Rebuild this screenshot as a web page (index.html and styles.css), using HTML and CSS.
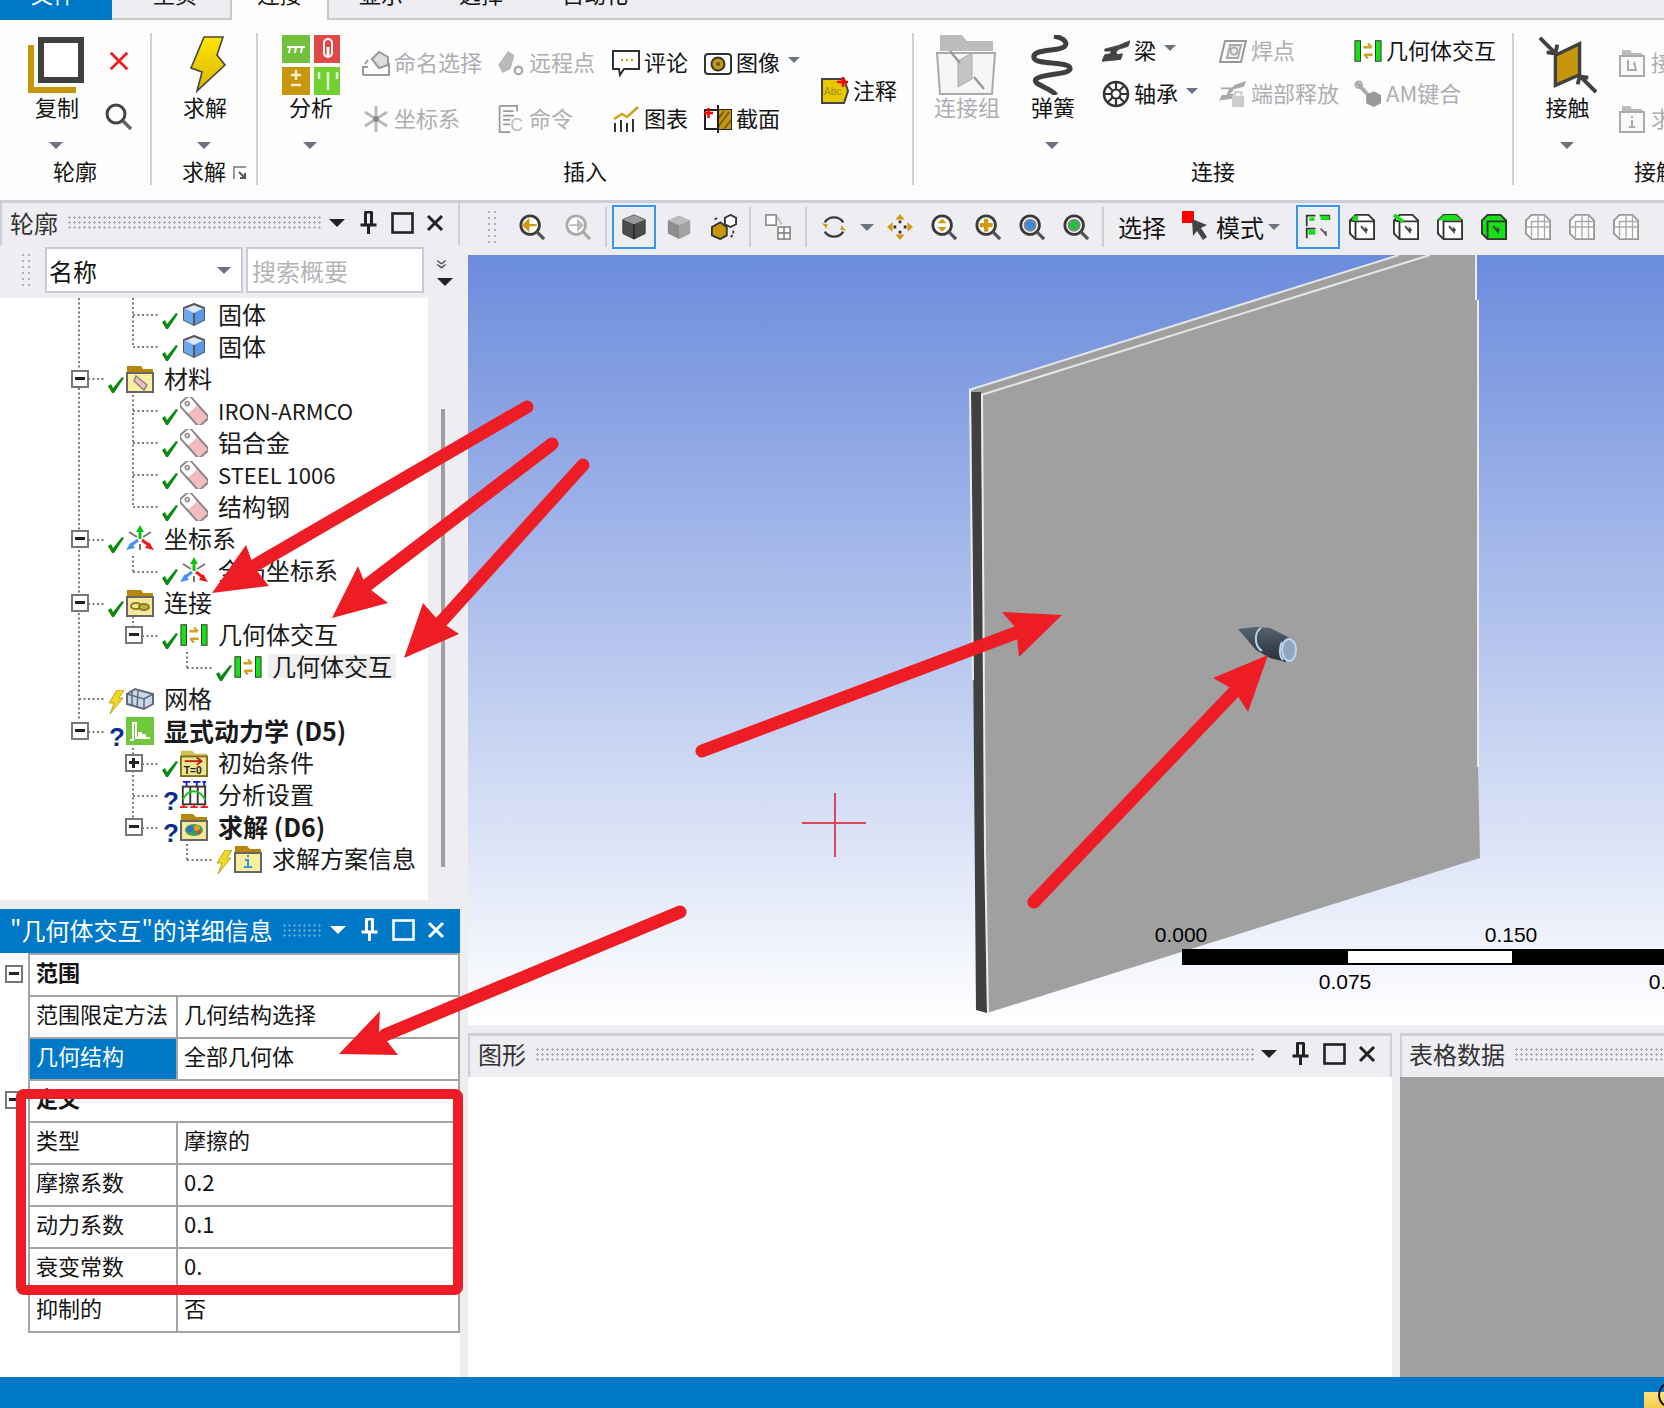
FILE: index.html
```html
<!DOCTYPE html>
<html lang="zh-CN">
<head>
<meta charset="utf-8">
<title>Mechanical</title>
<link rel="stylesheet" href="styles.css">
</head>
<body>
<svg class="defs" width="0" height="0" aria-hidden="true">
  <defs>
    <linearGradient id="gBolt" x1="0" y1="0" x2="0" y2="1"><stop offset="0" stop-color="#ffe600"/><stop offset="1" stop-color="#d8b400"/></linearGradient>
    <linearGradient id="gBullet" x1="0" y1="0" x2="0" y2="1"><stop offset="0" stop-color="#56626f"/><stop offset="1" stop-color="#262e38"/></linearGradient>

    <symbol id="copy" viewBox="0 0 60 60"><path d="M2 10h6v42h42v6H2z" fill="#c8960a"/><rect x="15" y="5" width="40" height="40" fill="#fff" stroke="#404040" stroke-width="6"/></symbol>
    <symbol id="redx" viewBox="0 0 24 24"><path d="M3 3l18 18M21 3L3 21" stroke="#f01c1c" stroke-width="3" fill="none"/></symbol>
    <symbol id="find" viewBox="0 0 28 28"><circle cx="11" cy="11" r="9" fill="none" stroke="#444" stroke-width="3"/><path d="M18 18l8 8" stroke="#666" stroke-width="3.500"/></symbol>
    <symbol id="bolt" viewBox="0 0 60 60"><path d="M30 2h19l-6 18 8 10-28 26 5-19-11-4z" fill="url(#gBolt)" stroke="#444" stroke-width="1.600"/></symbol>
    <symbol id="tiles" viewBox="-2 0 60 60"><rect width="28" height="28" fill="#72c03c"/><rect x="32" width="28" height="28" fill="#e04848"/><rect y="32" width="28" height="28" fill="#c8960a"/><rect x="32" y="32" width="28" height="28" fill="#72d030"/><path d="M5 12h18M8 12l-1 6M14 12l-1 6M20 12l-1 6" stroke="#fff" stroke-width="2"/><rect x="42" y="4" width="8" height="18" rx="4" fill="none" stroke="#fff" stroke-width="2"/><path d="M46 12v10" stroke="#fff" stroke-width="3"/><path d="M9 40h10M14 35v10M9 50h10" stroke="#fff" stroke-width="2.500" opacity=".8"/><path d="M37 37v7M46 37v18M55 37v7" stroke="#fff" stroke-width="2.500" opacity=".8"/></symbol>
    <symbol id="nsel" viewBox="0 0 28 28"><path d="M1 26v-8h5M1 26h26V14" fill="none" stroke="#999" stroke-width="2"/><path d="M10 10l7-7 9 5v8l-9 3z" fill="#ddd" stroke="#999" stroke-width="2"/><path d="M3 15l3-4" stroke="#999" stroke-width="2"/></symbol>
    <symbol id="coordgray" viewBox="0 0 28 28"><path d="M14 1v26M3 7l22 14M25 7L3 21" stroke="#bbb" stroke-width="3"/><circle cx="14" cy="14" r="3" fill="#888"/></symbol>
    <symbol id="remote" viewBox="0 0 30 28"><path d="M2 16L12 2l6 4-4 14-8 4z" fill="#bbb" stroke="#aaa"/><circle cx="23" cy="22" r="4" fill="none" stroke="#aaa" stroke-width="2.500"/></symbol>
    <symbol id="cmd" viewBox="0 0 28 32"><path d="M1 1h20v6M1 1v30h12" fill="none" stroke="#999" stroke-width="2"/><path d="M5 7h12M5 12h12M5 17h8M5 22h8" stroke="#999" stroke-width="2"/><text x="13" y="30" class="svgc">C</text></symbol>
    <symbol id="note" viewBox="0 0 28 26"><path d="M1 1h26v18H12l-4 6-1-6H1z" fill="#fff" stroke="#333" stroke-width="2"/><path d="M9 10h2M14 10h2M19 10h2" stroke="#c8960a" stroke-width="2"/></symbol>
    <symbol id="chart" viewBox="0 0 28 28"><path d="M2 14l8-5 5 3L26 2" fill="none" stroke="#d0a020" stroke-width="2.500"/><path d="M3 18v9M9 15v12M15 18v9M21 14v13" stroke="#333" stroke-width="2"/></symbol>
    <symbol id="camera" viewBox="0 0 28 26"><rect x="1" y="4" width="26" height="20" rx="3" fill="#fff" stroke="#333" stroke-width="2"/><circle cx="14" cy="14" r="6.500" fill="#c8960a" stroke="#333" stroke-width="2"/><circle cx="14" cy="14" r="2" fill="#555"/></symbol>
    <symbol id="section" viewBox="0 0 28 28"><rect x="1" y="5" width="26" height="19" fill="#fff" stroke="#222" stroke-width="2"/><rect x="14" y="5" width="13" height="19" fill="#c8960a"/><path d="M14 22l11-15M14 14l6-8M20 24l7-9" stroke="#7a5a08" stroke-width="2"/><path d="M14 0v28" stroke="#222" stroke-width="2"/><path d="M0 8h9M4.500 3v10" stroke="#f00" stroke-width="2.500"/></symbol>
    <symbol id="anno" viewBox="0 0 28 28"><path d="M1 2h22l4 12-4 12H1z" fill="#e8c800" stroke="#444" stroke-width="2"/><text x="3" y="18" class="svga">Abc</text><path d="M16 5h11M22 0v10" stroke="#f00" stroke-width="2.500"/></symbol>
    <symbol id="cgroup" viewBox="0 0 60 60"><path d="M4 16V0h22l5 6h26v10z" fill="#bcbcbc"/><path d="M1 18h58l-3 41H4z" fill="#f6f6f6" stroke="#aaa" stroke-width="2"/><path d="M22 26l14-8v26l-14 8z" fill="#c4c4c4" stroke="#aaa"/><path d="M14 16l10 12M48 54L38 42" stroke="#999" stroke-width="2.500"/></symbol>
    <symbol id="spring" viewBox="0 0 60 60"><path d="M32 1C46 4 48 12 36 14 24 16 10 16 12 23 14 30 46 26 48 33 50 40 20 38 14 44 10 50 28 52 34 60" fill="none" stroke="#3f3f3f" stroke-width="5"/></symbol>
    <symbol id="beam" viewBox="0 0 30 24"><path d="M3 10L18 6 30 1 28 7 18 10 15 13 16 16 22 15 20 21 0 23 3 16 9 15 10 12 3 12Z" fill="#444" stroke="#444"/></symbol>
    <symbol id="bearing" viewBox="0 0 28 28"><circle cx="14" cy="14" r="12" fill="none" stroke="#333" stroke-width="2.500"/><circle cx="14" cy="14" r="4.500" fill="none" stroke="#333" stroke-width="2"/><path d="M14 2v8M14 18v8M2 14h8M18 14h8M5.500 5.500l6 6M16.500 16.500l6 6M22.500 5.500l-6 6M11.500 16.500l-6 6" stroke="#333" stroke-width="2.200"/></symbol>
    <symbol id="weld" viewBox="0 0 28 26"><path d="M1 24L6 3h21l-5 21z" fill="none" stroke="#999" stroke-width="2"/><path d="M8 20l3-13h11l-3 13z" fill="#eee" stroke="#aaa" stroke-width="2"/><circle cx="15" cy="13" r="3.500" fill="none" stroke="#aaa" stroke-width="2"/></symbol>
    <symbol id="release" viewBox="0 0 30 30"><path d="M2 8h12l3-3L29 1l-2 6-11 3-4 5h4l-2 5-14 2 3-6h5l3-6H2z" fill="#aaa"/><rect x="14" y="17" width="13" height="12" fill="#ccc"/><path d="M17 17v-4h7v4" fill="none" stroke="#ccc" stroke-width="2"/></symbol>
    <symbol id="bodyint" viewBox="0 0 30 22"><rect x="1" width="6" height="22" fill="#16e016" stroke="#333" stroke-width="1"/><rect x="23" width="6" height="22" fill="#16e016" stroke="#333" stroke-width="1"/><path d="M10 7h9M15 3l4 4M20 15h-9M15 19l-4-4" fill="none" stroke="#d0a020" stroke-width="2.500"/></symbol>
    <symbol id="amb" viewBox="0 0 30 30"><path d="M3 3l13 14" stroke="#aaa" stroke-width="4"/><circle cx="5" cy="5" r="3.500" fill="none" stroke="#aaa" stroke-width="2"/><path d="M21 12l8 4v9l-8 4-8-4v-9z" fill="#999"/></symbol>
    <symbol id="contact" viewBox="0 0 62 60"><path d="M19 20L44 8v32L19 51z" fill="#c8960a" stroke="#404040" stroke-width="3.500"/><path d="M3 2l15 15M21 9l-2 9-9-1M61 58L46 43M42 50l2-8 9 1" fill="none" stroke="#404040" stroke-width="4"/></symbol>
    <symbol id="ffold" viewBox="0 0 26 28"><path d="M3 6V1h8l2 3h10v2z" fill="#bbb"/><rect x="1" y="7" width="24" height="20" fill="#fafafa" stroke="#aaa" stroke-width="2"/><path d="M9 11v10h8l-2-8" fill="none" stroke="#aaa" stroke-width="2"/></symbol>
    <symbol id="ffold2" viewBox="0 0 26 28"><path d="M3 6V1h8l2 3h10v2z" fill="#bbb"/><rect x="1" y="7" width="24" height="20" fill="#fafafa" stroke="#aaa" stroke-width="2"/><path d="M13 11v2M13 15v7M10 22h6" stroke="#aaa" stroke-width="2"/></symbol>
    <symbol id="corner" viewBox="0 0 14 14"><path d="M13 1H1v12" fill="none" stroke="#777" stroke-width="1.500"/><path d="M6 6l6 6M12 7v5H7" fill="none" stroke="#555" stroke-width="2"/></symbol>

    <symbol id="pin" viewBox="0 0 20 24"><path d="M6 1h8M7 1v12M13 1v12M2 14h16M10 14v9" fill="none" stroke="currentColor" stroke-width="3"/></symbol>
    <symbol id="maxi" viewBox="0 0 33 24"><rect x="7.500" y="2.500" width="20" height="19" fill="none" stroke="currentColor" stroke-width="2.600"/></symbol>
    <symbol id="closex" viewBox="0 0 33 24"><path d="M10 5l14 14M24 5L10 19" stroke="currentColor" stroke-width="3" fill="none"/></symbol>

    <symbol id="check" viewBox="0 0 16 16"><path d="M0 9l3-2 2 4 9-11 2 1L6 16H4z" fill="#0a8a0a"/></symbol>
    <symbol id="sbolt" viewBox="0 0 16 24"><path d="M9 0h7l-5 8h4L2 24l4-11H1z" fill="#f3d820" stroke="#a89420" stroke-width=".8"/></symbol>
    <symbol id="solid" viewBox="0 0 28 28"><path d="M14 3l10 4v12l-10 5-10-5V7z" fill="#dce8f8" stroke="#555" stroke-width="2"/><path d="M4 7l10 5v12L4 19z" fill="#70a8f0"/><path d="M14 12l10-5v12l-10 5z" fill="#5b95e5"/><path d="M14 12v12" stroke="#555" stroke-width="2"/></symbol>
    <symbol id="tag" viewBox="0 0 28 28"><g transform="rotate(-42 14 14)"><rect x="7" y="-1" width="14" height="30" rx="3" fill="#f4bcbc" stroke="#888" stroke-width="2"/><rect x="8" y="0" width="12" height="12" rx="2" fill="#fff"/><circle cx="14" cy="4" r="2" fill="none" stroke="#888" stroke-width="1.500"/></g></symbol>
    <symbol id="fmat" viewBox="0 0 28 28"><path d="M1 8V1h14l2 3h10v4z" fill="#b8860b"/><rect x="1" y="8" width="26" height="19" fill="#fbeea0" stroke="#666" stroke-width="2"/><path d="M10 11l11 9-3 5-10-9z" fill="#f4bcbc" stroke="#888" stroke-width="1.500"/></symbol>
    <symbol id="axes" viewBox="0 0 28 28"><path d="M3 7l8 5M25 7l-8 5" stroke="#777" stroke-width="2"/><path d="M14 14V5" stroke="#10c010" stroke-width="3"/><path d="M14 0l-4 7h8z" fill="#10c010"/><path d="M12 15l-8 6" stroke="#4a90f0" stroke-width="3"/><path d="M0 25l5-8 4 6z" fill="#4a90f0"/><path d="M16 15l8 6" stroke="#e81c1c" stroke-width="3"/><path d="M28 25l-5-8-4 6z" fill="#e81c1c"/><path d="M14 19v6" stroke="#777" stroke-width="2"/></symbol>
    <symbol id="fconn" viewBox="0 0 28 28"><path d="M1 8V1h14l2 3h10v4z" fill="#b8860b"/><rect x="1" y="8" width="26" height="19" fill="#f6e89a" stroke="#666" stroke-width="2"/><ellipse cx="10" cy="17" rx="5" ry="3" fill="none" stroke="#8a7a20" stroke-width="2"/><ellipse cx="18" cy="18" rx="5" ry="3" fill="#c8b040" stroke="#8a7a20" stroke-width="2"/></symbol>
    <symbol id="mesh" viewBox="0 0 28 22"><path d="M1 6l8-5 18 5v10l-9 5L1 16z" fill="#c8d8ec" stroke="#667" stroke-width="2"/><path d="M1 6l17 5 9-5M18 11v10M6 3v15M12 3l-1 17" fill="none" stroke="#667" stroke-width="1.500"/></symbol>
    <symbol id="dyn" viewBox="0 0 28 28"><rect width="28" height="28" fill="#72c83c"/><path d="M4 23h3V6h3v15h3v-5h2v5h2v-3h2v3h5" fill="none" stroke="#fff" stroke-width="2"/></symbol>
    <symbol id="finit" viewBox="0 0 30 30"><path d="M1 9V2h12l3 3h13v4z" fill="#d4c050"/><rect x="1" y="8" width="28" height="21" fill="#efe58c" stroke="#7a7020" stroke-width="2"/><path d="M5 13h18M18 9l5 4-5 4" fill="none" stroke="#c01818" stroke-width="2"/><text x="4" y="27" class="svgt">T=0</text></symbol>
    <symbol id="settings" viewBox="0 0 30 30"><path d="M3 1h8M7 1v5M14 1h8M18 1v5M24 1h4M26 1v5" stroke="#1c1cd0" stroke-width="2"/><rect x="3" y="6" width="24" height="19" fill="#fff" stroke="#333" stroke-width="2"/><path d="M11 6v19M19 6v19" stroke="#333" stroke-width="2"/><path d="M3 20C9 8 20 8 27 20" fill="none" stroke="#12c812" stroke-width="2"/><path d="M0 28h8M4 25v3M11 28h8M15 25v3M22 28h8M26 25v3" stroke="#f01818" stroke-width="2"/></symbol>
    <symbol id="fsolve" viewBox="0 0 28 28"><path d="M1 8V1h12l3 3h11v4z" fill="#b8860b"/><rect x="1" y="8" width="26" height="19" fill="#f4e89a" stroke="#666" stroke-width="2"/><ellipse cx="14" cy="17" rx="9" ry="6" fill="#3d9a60"/><circle cx="10" cy="16" r="3" fill="#3070d0"/><circle cx="17" cy="15" r="3" fill="#e0a020"/><circle cx="19" cy="19" r="2" fill="#d84040"/></symbol>
    <symbol id="finfo" viewBox="0 0 28 28"><path d="M1 8V1h12l3 3h11v4z" fill="#b8860b"/><rect x="1" y="8" width="26" height="19" fill="#f8ee9c" stroke="#666" stroke-width="2"/><path d="M14 10v2M11 15h3v7M10 22h8" fill="none" stroke="#3a90e8" stroke-width="2"/></symbol>

    <symbol id="mg" viewBox="0 0 28 28"><circle cx="12" cy="12" r="10" fill="#fff" stroke="#3a3a3a" stroke-width="3"/><path d="M19 19l8 8" stroke="#555" stroke-width="3.500"/></symbol>
    <symbol id="zprev" viewBox="0 0 28 28"><use href="#mg"/><path d="M5 12h14M5 12l5-5v10z" fill="#d09a10" stroke="#d09a10" stroke-width="2.500"/></symbol>
    <symbol id="znext" viewBox="0 0 28 28"><circle cx="12" cy="12" r="10" fill="#fff" stroke="#aaa" stroke-width="3"/><path d="M19 19l8 8" stroke="#aaa" stroke-width="3.500"/><path d="M5 12h13M19 12l-5-5v10z" fill="#bbb" stroke="#bbb" stroke-width="2"/></symbol>
    <symbol id="cubeD" viewBox="0 0 28 28"><path d="M14 1l12 5v15l-12 6-12-6V6z" fill="#4c4c4c" stroke="#333"/><path d="M2 6l12-5 12 5-12 5z" fill="#9a9a9a"/><path d="M14 11v16" stroke="#222" stroke-width="1.500"/></symbol>
    <symbol id="cubeL" viewBox="0 0 28 28"><path d="M14 2l12 5v14l-12 6-12-6V7z" fill="#8c8c8c"/><path d="M2 7l12-5 12 5-12 5z" fill="#bdbdbd"/><path d="M14 12l12-5v14l-12 6z" fill="#a4a4a4"/></symbol>
    <symbol id="cubeX" viewBox="0 0 28 28"><path d="M1 14l9-5 7 5v9l-7 4-9-4z" fill="#c8960a" stroke="#333" stroke-width="2"/><path d="M15 4l6-3 6 3v7l-6 3-6-3z" fill="#fff" stroke="#333" stroke-width="2"/><path d="M4 6l4-3M24 18v4l-4 4" fill="none" stroke="#333" stroke-width="2" stroke-dasharray="3 2"/></symbol>
    <symbol id="grid2" viewBox="0 0 28 28"><rect x="1" y="1" width="11" height="11" fill="#fff" stroke="#777" stroke-width="1.500"/><rect x="14" y="14" width="13" height="13" fill="#fff" stroke="#777" stroke-width="1.500"/><path d="M20.500 14v13M14 20.500h13" stroke="#777" stroke-width="1.500"/><path d="M13 3l5 8" stroke="#bbb" stroke-width="2"/></symbol>
    <symbol id="orbit" viewBox="0 0 28 28"><path d="M4 9A12 12 0 0 1 24 9M24 19A12 12 0 0 1 4 19" fill="none" stroke="#3a3a3a" stroke-width="2.500"/><path d="M1 10l6 1-1 5zM27 18l-6-1 1-5z" fill="#d09a10"/></symbol>
    <symbol id="pan" viewBox="0 0 28 28"><path d="M14 0l5 6H9zM14 28l-5-6h10zM0 14l6-5v10zM28 14l-6 5V9z" fill="#d09a10"/><path d="M14 7v3M14 18v3M7 14h3M18 14h3" stroke="#333" stroke-width="3"/></symbol>
    <symbol id="zud" viewBox="0 0 28 28"><use href="#mg"/><path d="M12 5l5 5H7zM12 19l-5-5h10z" fill="#d09a10"/></symbol>
    <symbol id="zplus" viewBox="0 0 28 28"><use href="#mg"/><path d="M12 5v14M5 12h14" stroke="#d09a10" stroke-width="4.500"/></symbol>
    <symbol id="zblue" viewBox="0 0 28 28"><use href="#mg"/><circle cx="12" cy="12" r="6" fill="#3e88d8" stroke="#888" stroke-width="2"/></symbol>
    <symbol id="zgreen" viewBox="0 0 28 28"><use href="#mg"/><circle cx="12" cy="12" r="6" fill="#20c040" stroke="#888" stroke-width="2"/></symbol>
    <symbol id="cursor" viewBox="0 0 26 32"><rect width="12" height="12" fill="#f00"/><path d="M10 8l15 6-6 3 6 9-4 3-6-9-4 5z" fill="#444"/></symbol>
    <symbol id="selAll" viewBox="0 0 30 30"><path d="M2 14V2h10M17 2h11v5M2 28V17h10" fill="none" stroke="#333" stroke-width="2"/><rect x="5" y="4" width="6" height="4" fill="#16e016"/><rect x="18" y="2" width="10" height="5" fill="#16e016"/><rect x="4" y="18" width="8" height="6" fill="#16e016"/><path d="M18 17l6 6v-3M25 25l-2-2" stroke="#555" stroke-width="2" fill="none"/></symbol>
    <symbol id="cv" viewBox="0 0 28 28"><path d="M1 7l6-6h14l6 6v20H7l-6-6z" fill="#fff" stroke="#333" stroke-width="2"/><path d="M7 27V8h20M1 7l6 1" fill="none" stroke="#333" stroke-width="2"/><rect x="4" y="2" width="6" height="5" fill="#16e016"/><path d="M13 13l5 6v-3l2 2" fill="none" stroke="#444" stroke-width="2"/></symbol>
    <symbol id="ce" viewBox="0 0 28 28"><path d="M1 7l6-6h14l6 6v20H7l-6-6z" fill="#fff" stroke="#333" stroke-width="2"/><path d="M7 27V8h20M1 7l6 1" fill="none" stroke="#333" stroke-width="2"/><path d="M1 1l10 7" stroke="#16e016" stroke-width="4"/><path d="M13 13l5 6v-3l2 2" fill="none" stroke="#444" stroke-width="2"/></symbol>
    <symbol id="cf" viewBox="0 0 28 28"><path d="M1 7l6-6h14l6 6v20H7l-6-6z" fill="#fff" stroke="#333" stroke-width="2"/><path d="M1 7l6-6h14l6 6H7z" fill="#16e016"/><path d="M7 27V8h20" fill="none" stroke="#333" stroke-width="2"/><path d="M13 13l5 6v-3l2 2" fill="none" stroke="#444" stroke-width="2"/></symbol>
    <symbol id="cb" viewBox="0 0 28 28"><path d="M1 7l6-6h14l6 6v20H7l-6-6z" fill="#16e016" stroke="#333" stroke-width="2"/><path d="M7 27V8h20" fill="none" stroke="#333" stroke-width="2"/><path d="M13 13l5 6v-3l2 2" fill="none" stroke="#444" stroke-width="2"/></symbol>
    <symbol id="cg" viewBox="0 0 28 28"><path d="M1 7l6-6h14l6 6v20H7l-6-6z" fill="#fff" stroke="#999" stroke-width="2"/><path d="M7 27V8h20M14 1v26M21 1v26M1 14h26" fill="none" stroke="#aaa" stroke-width="1.500"/></symbol>
  </defs>
</svg>

<nav class="tabs">
  <div class="tab tab-file">文件</div>
  <div class="tab tab-home">主页</div>
  <div class="tab tab-active">连接</div>
  <div class="tab tab-show">显示</div>
  <div class="tab tab-sel">选择</div>
  <div class="tab tab-auto">自动化</div>
  <div class="tab tab-rest"></div>
</nav>

<section class="ribbon">
  <div class="grp g1">
    <div class="grp-body">
      <div class="big w112"><svg class="bi"><use href="#copy"/></svg><span>复制</span><i class="caret"></i></div>
      <div class="stack"><svg class="ic24"><use href="#redx"/></svg><svg class="ic28"><use href="#find"/></svg></div>
    </div>
    <div class="grp-label">轮廓</div>
  </div>
  <div class="grp g2">
    <div class="grp-body"><div class="big w104"><svg class="bi"><use href="#bolt"/></svg><span>求解</span><i class="caret"></i></div></div>
    <div class="grp-label">求解<svg class="corner"><use href="#corner"/></svg></div>
  </div>
  <div class="grp g3">
    <div class="grp-body">
      <div class="big w104"><svg class="bi"><use href="#tiles"/></svg><span>分析</span><i class="caret"></i></div>
      <div class="insert-grid">
        <div class="item off"><svg class="ic28"><use href="#nsel"/></svg>命名选择</div>
        <div class="item off"><svg class="ic28"><use href="#remote"/></svg>远程点</div>
        <div class="item"><svg class="ic28"><use href="#note"/></svg>评论</div>
        <div class="item"><svg class="ic28"><use href="#camera"/></svg>图像<i class="caret small"></i></div>
        <div class="item span2"><svg class="ic28"><use href="#anno"/></svg>注释</div>
        <div class="item off"><svg class="ic28"><use href="#coordgray"/></svg>坐标系</div>
        <div class="item off"><svg class="ic28"><use href="#cmd"/></svg>命令</div>
        <div class="item"><svg class="ic28"><use href="#chart"/></svg>图表</div>
        <div class="item"><svg class="ic28"><use href="#section"/></svg>截面</div>
      </div>
    </div>
    <div class="grp-label">插入</div>
  </div>
  <div class="grp g4">
    <div class="grp-body">
      <div class="big w104 off"><svg class="bi"><use href="#cgroup"/></svg><span>连接组</span></div>
      <div class="big w68"><svg class="bi"><use href="#spring"/></svg><span>弹簧</span><i class="caret"></i></div>
      <div class="conn-grid">
        <div class="item"><svg class="ic28"><use href="#beam"/></svg>梁<i class="caret small"></i></div>
        <div class="item off"><svg class="ic28"><use href="#weld"/></svg>焊点</div>
        <div class="item"><svg class="ic28"><use href="#bodyint"/></svg>几何体交互</div>
        <div class="item"><svg class="ic28"><use href="#bearing"/></svg>轴承<i class="caret small"></i></div>
        <div class="item off"><svg class="ic28"><use href="#release"/></svg>端部释放</div>
        <div class="item off"><svg class="ic28"><use href="#amb"/></svg>AM键合</div>
      </div>
    </div>
    <div class="grp-label">连接</div>
  </div>
  <div class="grp g5">
    <div class="grp-body">
      <div class="big w105"><svg class="bi"><use href="#contact"/></svg><span>接触</span><i class="caret"></i></div>
      <div class="tail-col">
        <div class="item off"><svg class="ic26"><use href="#ffold"/></svg>接触工具</div>
        <div class="item off"><svg class="ic26"><use href="#ffold2"/></svg>求解方案</div>
      </div>
    </div>
    <div class="grp-label">接触</div>
  </div>
</section>

<main class="main">
  <aside class="left">
    <div class="phead bordered">
      <span class="ptitle">轮廓</span><span class="dots"></span>
      <span class="pctl"><i class="caret dark"></i></span>
      <svg class="pbtn"><use href="#pin"/></svg><svg class="pbtn"><use href="#maxi"/></svg><svg class="pbtn"><use href="#closex"/></svg>
    </div>
    <div class="search">
      <span class="grip"></span>
      <div class="combo">名称<i class="caret"></i></div>
      <div class="sbox">搜索概要</div>
      <div class="chev"><span class="chev-top">»</span><i class="caret dark"></i></div>
    </div>
    <div class="treewrap">
      <div class="tree">
        <svg class="tree-lines" viewBox="0 298 428 602">
          <path d="M79 298V720M133 298V347M133 395V507M133 556V572M133 612V628M133 748V828M187 652V668M187 844V860M88 379H106M88 540H106M88 604H106M88 732H106M79 699H106M133 315H160M133 347H160M133 411H160M133 443H160M133 475H160M133 507H160M133 572H160M142 636H160M142 764H160M133 796H160M142 828H160M187 668H214M187 860H214"/>
        </svg>
        <div class="row d2"><span class="tw"></span><svg class="st"><use href="#check"/></svg><svg class="ti"><use href="#solid"/></svg><span class="lb">固体</span></div>
        <div class="row d2"><span class="tw"></span><svg class="st"><use href="#check"/></svg><svg class="ti"><use href="#solid"/></svg><span class="lb">固体</span></div>
        <div class="row d1"><span class="tw"><b class="bx"></b></span><svg class="st"><use href="#check"/></svg><svg class="ti"><use href="#fmat"/></svg><span class="lb">材料</span></div>
        <div class="row d2"><span class="tw"></span><svg class="st"><use href="#check"/></svg><svg class="ti"><use href="#tag"/></svg><span class="lb lat">IRON-ARMCO</span></div>
        <div class="row d2"><span class="tw"></span><svg class="st"><use href="#check"/></svg><svg class="ti"><use href="#tag"/></svg><span class="lb">铝合金</span></div>
        <div class="row d2"><span class="tw"></span><svg class="st"><use href="#check"/></svg><svg class="ti"><use href="#tag"/></svg><span class="lb lat">STEEL 1006</span></div>
        <div class="row d2"><span class="tw"></span><svg class="st"><use href="#check"/></svg><svg class="ti"><use href="#tag"/></svg><span class="lb">结构钢</span></div>
        <div class="row d1"><span class="tw"><b class="bx"></b></span><svg class="st"><use href="#check"/></svg><svg class="ti"><use href="#axes"/></svg><span class="lb">坐标系</span></div>
        <div class="row d2"><span class="tw"></span><svg class="st"><use href="#check"/></svg><svg class="ti"><use href="#axes"/></svg><span class="lb">全局坐标系</span></div>
        <div class="row d1"><span class="tw"><b class="bx"></b></span><svg class="st"><use href="#check"/></svg><svg class="ti"><use href="#fconn"/></svg><span class="lb">连接</span></div>
        <div class="row d2"><span class="tw"><b class="bx"></b></span><svg class="st"><use href="#check"/></svg><svg class="ti"><use href="#bodyint"/></svg><span class="lb">几何体交互</span></div>
        <div class="row d3"><span class="tw"></span><svg class="st"><use href="#check"/></svg><svg class="ti"><use href="#bodyint"/></svg><span class="lb sel">几何体交互</span></div>
        <div class="row d1"><span class="tw"></span><svg class="st bolt"><use href="#sbolt"/></svg><svg class="ti"><use href="#mesh"/></svg><span class="lb">网格</span></div>
        <div class="row d1"><span class="tw"><b class="bx"></b></span><span class="q">?</span><svg class="ti"><use href="#dyn"/></svg><span class="lb strong">显式动力学 (D5)</span></div>
        <div class="row d2"><span class="tw"><b class="bx plus"></b></span><svg class="st"><use href="#check"/></svg><svg class="ti"><use href="#finit"/></svg><span class="lb">初始条件</span></div>
        <div class="row d2"><span class="tw"></span><span class="q">?</span><svg class="ti"><use href="#settings"/></svg><span class="lb">分析设置</span></div>
        <div class="row d2"><span class="tw"><b class="bx"></b></span><span class="q">?</span><svg class="ti"><use href="#fsolve"/></svg><span class="lb strong">求解 (D6)</span></div>
        <div class="row d3"><span class="tw"></span><svg class="st bolt"><use href="#sbolt"/></svg><svg class="ti"><use href="#finfo"/></svg><span class="lb">求解方案信息</span></div>
      </div>
      <div class="scroller"><span class="thumb"></span></div>
    </div>
    <div class="phead blue">
      <span class="ptitle">"几何体交互"的详细信息</span><span class="dots light"></span>
      <span class="pctl"><i class="caret wht"></i></span>
      <svg class="pbtn"><use href="#pin"/></svg><svg class="pbtn"><use href="#maxi"/></svg><svg class="pbtn"><use href="#closex"/></svg>
    </div>
    <div class="details">
      <table class="dt">
        <colgroup><col class="c0"><col class="c1"><col></colgroup>
        <tr><td class="gut"><b class="bx"></b></td><td colspan="2" class="sec">范围</td></tr>
        <tr><td class="gut"></td><td>范围限定方法</td><td>几何结构选择</td></tr>
        <tr><td class="gut"></td><td class="hl">几何结构</td><td>全部几何体</td></tr>
        <tr><td class="gut"><b class="bx"></b></td><td colspan="2" class="sec">定义</td></tr>
        <tr><td class="gut"></td><td>类型</td><td>摩擦的</td></tr>
        <tr><td class="gut"></td><td>摩擦系数</td><td>0.2</td></tr>
        <tr><td class="gut"></td><td>动力系数</td><td>0.1</td></tr>
        <tr><td class="gut"></td><td>衰变常数</td><td>0.</td></tr>
        <tr><td class="gut"></td><td>抑制的</td><td>否</td></tr>
      </table>
    </div>
  </aside>

  <div class="right">
    <div class="toolbar">
      <span class="grip"></span>
      <div class="tg ga"><svg class="tool"><use href="#zprev"/></svg><svg class="tool"><use href="#znext"/></svg></div>
      <span class="tsep s5"></span>
      <div class="tg gb"><span class="tool on"><svg><use href="#cubeD"/></svg></span><svg class="tool"><use href="#cubeL"/></svg><svg class="tool"><use href="#cubeX"/></svg></div>
      <span class="tsep s3"></span>
      <div class="tg gc"><svg class="tool"><use href="#grid2"/></svg></div>
      <span class="tsep s5"></span>
      <div class="tg gc"><svg class="tool"><use href="#orbit"/></svg><span class="tcaret"><i class="caret"></i></span><svg class="tool"><use href="#pan"/></svg><svg class="tool"><use href="#zud"/></svg><svg class="tool"><use href="#zplus"/></svg><svg class="tool"><use href="#zblue"/></svg><svg class="tool"><use href="#zgreen"/></svg></div>
      <span class="tsep s4"></span>
      <span class="ttext t1">选择</span>
      <svg class="tcur"><use href="#cursor"/></svg>
      <span class="ttext t2">模式</span><i class="caret mode"></i>
      <div class="tg gd"><span class="tool on"><svg><use href="#selAll"/></svg></span><svg class="tool"><use href="#cv"/></svg><svg class="tool"><use href="#ce"/></svg><svg class="tool"><use href="#cf"/></svg><svg class="tool"><use href="#cb"/></svg><svg class="tool"><use href="#cg"/></svg><svg class="tool"><use href="#cg"/></svg><svg class="tool"><use href="#cg"/></svg></div>
    </div>
    <div class="view">
      <svg class="scene" viewBox="468 255 1196 770">
        <path d="M969 390L1399 255H1475V300L981 395Z" class="plate"/>
        <path d="M981 395L1430 255H1475L1477 300L1478 767L1480 858L987 1013Z" class="plate"/>
        <path d="M969 390L1399 255M981 395L1430 255" class="pl-line"/>
        <path d="M971 392H981L987 1013L976 1010Z" class="pl-dark"/>
        <path d="M982 395L985 850L988 1013" class="pl-edge"/>
        <path d="M1476 255V300M1478 300V767" class="pl-edge"/>
        <path d="M970 390L973 680" class="pl-edge"/>
        <path d="M802 823H866M835 793V857" class="cross"/>
        <path d="M1238 629L1256 627L1270 628L1294 640L1286 662L1270 658L1256 650Z" fill="url(#gBullet)"/>
        <path d="M1261 628C1254 632 1254 646 1262 651" class="blt"/>
        <ellipse cx="1289" cy="650" rx="7" ry="11" fill="#8fa6c0" stroke="#bcd6f0" stroke-width="2"/>
        <path d="M1282 642C1279 648 1279 656 1283 660" class="blt"/>
        <rect x="1182" y="949" width="482" height="16" fill="#000"/>
        <rect x="1348" y="951" width="164" height="12" fill="#fff"/>
        <text x="1181" y="942" class="sc">0.000</text>
        <text x="1511" y="942" class="sc">0.150</text>
        <text x="1345" y="989" class="sc">0.075</text>
        <text x="1675" y="989" class="sc">0.225</text>
      </svg>
    </div>
    <div class="lower">
      <section class="lp gfx">
        <div class="phead bordered">
          <span class="ptitle">图形</span><span class="dots"></span>
          <span class="pctl"><i class="caret dark"></i></span>
          <svg class="pbtn"><use href="#pin"/></svg><svg class="pbtn"><use href="#maxi"/></svg><svg class="pbtn"><use href="#closex"/></svg>
        </div>
        <div class="lp-body fill-white"></div>
      </section>
      <section class="lp tbl">
        <div class="phead bordered">
          <span class="ptitle">表格数据</span><span class="dots"></span>
        </div>
        <div class="lp-body fill-gray"></div>
      </section>
    </div>
  </div>
</main>

<footer class="status"><span class="msg"></span><span class="ring"></span></footer>

<svg class="marks" viewBox="0 0 1664 1408" aria-hidden="true">
  <g class="ar-line">
    <path d="M527 407L240 574"/>
    <path d="M552 444L358 592"/>
    <path d="M583 465L432 632"/>
    <path d="M702 751L1018 632"/>
    <path d="M1034 902L1234 692"/>
    <path d="M680 912L385 1035"/>
  </g>
  <g class="ar-head">
    <path d="M212 593L246 545L254 567L269 586Z"/>
    <path d="M332 618L358 566L366 586L388 603Z"/>
    <path d="M404 658L423 603L438 620L459 634Z"/>
    <path d="M1062 615L1002 612L1016 628L1019 657Z"/>
    <path d="M1268 655L1213 678L1234 690L1248 712Z"/>
    <path d="M339 1054L380 1011L379 1031L398 1055Z"/>
  </g>
  <rect x="21" y="1094" width="437" height="196" rx="3" class="redbox"/>
</svg>
</body>
</html>
```
FILE: styles.css
```css
* { box-sizing: border-box; }
html, body { margin: 0; padding: 0; }
body {
  position: relative;
  width: 1664px;
  height: 1408px;
  overflow: hidden;
  background: #eeeef2;
  color: #141414;
  font-family: "Noto Sans CJK SC", "Noto Sans", sans-serif;
  font-size: 22px;
  line-height: 24px;
}
i { display: block; font-style: normal; }
svg { display: block; flex: none; overflow: visible; }
.defs { position: absolute; }

.tabs { display: flex; align-items: flex-start; height: 20px; overflow: hidden; background: #eeeef2; }
.tab { flex: none; height: 39px; margin-top: -19px; text-align: center; border-bottom: 2px solid #c8c8c8; }
.tab-file { width: 112px; padding-right: 6px; background: #0078c8; color: #fff; border-bottom-color: #0078c8; }
.tab-home { width: 120px; padding-left: 8px; border-right: 2px solid #c8c8c8; }
.tab-active { width: 95px; background: #fdfdfd; border-bottom-color: #fdfdfd; }
.tab-show { width: 106px; border-left: 2px solid #c8c8c8; }
.tab-sel { width: 96px; }
.tab-auto { width: 132px; }
.tab-rest { flex: 1; }

/* ribbon */
.ribbon { display: flex; height: 180px; padding-top: 13px; background: #fdfdfd; overflow: hidden; }
.grp { flex: none; height: 152px; display: grid; grid-template-rows: 126px 26px; border-right: 2px solid #cfcfd4; }
.g1 { width: 152px; }
.g2 { width: 106px; }
.g3 { width: 656px; }
.g4 { width: 600px; }
.g5 { width: 284px; border-right: 0; }
.grp-body { display: flex; align-items: flex-start; }
.grp-label { position: relative; text-align: center; line-height: 22px; }
.corner { position: absolute; left: 81px; top: 7px; width: 14px; height: 14px; }
.big { flex: none; display: flex; flex-direction: column; align-items: center; padding-top: 2px; }
.big span { height: 24px; margin-top: -1px; padding-left: 2px; }
.w112 { width: 112px; }
.w105 { width: 105px; }
.w104 { width: 104px; }
.w68 { width: 68px; }
.bi { width: 60px; height: 60px; }
.caret { width: 0; height: 0; border-left: 7px solid transparent; border-right: 7px solid transparent; border-top: 7px solid #6b7280; }
.big .caret { margin-top: 24px; }
.caret.small { border-width: 6px 6px 0; margin-left: 4px; margin-top: -2px; }
.caret.dark { border-left-width: 8px; border-right-width: 8px; border-top: 8px solid #222; }
.caret.wht { border-left-width: 8px; border-right-width: 8px; border-top: 8px solid #fff; }
.stack { display: flex; flex-direction: column; align-items: center; width: 20px; gap: 31px; padding-top: 17px; margin-left: -3px; }
.ic24 { width: 22px; height: 22px; }
.ic28 { width: 28px; height: 28px; }
.ic26 { width: 26px; height: 28px; }
.item { display: flex; align-items: center; gap: 4px; padding-bottom: 4px; white-space: nowrap; }
.item svg { margin-top: 4px; }
.off { color: #adadb2; }
.insert-grid { display: grid; grid-template-columns: 135px 115px 92px 117px 90px; grid-template-rows: 56px 56px; padding-top: 2px; }
.span2 { grid-row: 1 / span 2; grid-column: 5; }
.conn-grid { display: grid; grid-template-columns: 117px 135px 140px; grid-template-rows: 36px 36px; row-gap: 7px; margin-left: 16px; }
.tail-col { display: grid; grid-template-rows: 56px 56px; padding-top: 2px; }
.tail-col .item { gap: 6px; }
.svgc { font: 20px "Liberation Sans", sans-serif; fill: #bbb; }
.svga { font: 10px "Liberation Sans", sans-serif; fill: #9a8a10; }
.svgt { font: bold 11px "Liberation Sans", sans-serif; fill: #222; }

/* shell */
.main { display: grid; grid-template-columns: 460px 1fr; height: 1177px; border-top: 3px solid #ccced8; }
.left { display: flex; flex-direction: column; min-height: 0; }
.right { display: flex; flex-direction: column; min-width: 0; padding-left: 8px; }

/* panel heads */
.phead { flex: none; display: flex; align-items: center; height: 42px; padding: 0 8px 3px 10px; font-size: 24px; color: #333; }
.phead.bordered { border-left: 2px solid #ccced8; border-right: 2px solid #ccced8; padding-left: 8px; padding-right: 7px; }
.phead.blue { height: 44px; padding-bottom: 2px; background: #0078c8; color: #fff; margin-top: 9px; }
.ptitle { flex: none; white-space: nowrap; }
.dots { flex: 1; height: 15px; margin-left: 9px; background-image: radial-gradient(circle, #b0b0b8 1px, transparent 1.2px); background-size: 5px 5px; }
.dots.light { background-image: radial-gradient(circle, #5aa4dc 1px, transparent 1.2px); }
.pctl { flex: none; width: 30px; display: flex; justify-content: center; }
.pbtn { width: 33px; height: 24px; color: #222; flex: none; }
.blue .pbtn { color: #fff; }

/* search */
.search { flex: none; display: flex; align-items: center; height: 53px; padding: 0 0 4px 20px; }
.grip { flex: none; width: 14px; height: 36px; background-image: radial-gradient(circle, #b0b0b8 1.2px, transparent 1.4px); background-size: 6px 6px; }
.search .grip { margin-right: 11px; }
.combo { flex: none; display: flex; justify-content: space-between; align-items: center; width: 198px; height: 46px; padding: 2px 10px 0 2px; background: #fff; border: 2px solid #c8cad8; font-size: 24px; }
.sbox { flex: none; width: 178px; height: 46px; margin-left: 3px; padding: 10px 0 0 4px; background: #fff; border: 2px solid #c8cad8; font-size: 24px; color: #b5b5b8; }
.chev { flex: none; width: 22px; margin-left: 10px; display: flex; flex-direction: column; align-items: center; gap: 3px; }
.chev-top { transform: rotate(90deg); color: #555; font-size: 22px; line-height: 22px; height: 22px; }

/* tree */
.treewrap { flex: none; display: flex; height: 602px; }
.tree { position: relative; width: 428px; padding-top: 1px; background: #fff; font-size: 24px; color: #1a1a1a; }
.tree-lines { position: absolute; left: 0; top: 0; width: 428px; height: 602px; fill: none; stroke: #7c7c7c; stroke-width: 2; stroke-dasharray: 2 2.500; }
.row { position: relative; display: flex; align-items: center; height: 32px; white-space: nowrap; }
.d1 { padding-left: 71px; }
.d2 { padding-left: 125px; }
.d3 { padding-left: 179px; }
.tw { flex: none; width: 37px; display: flex; }
.bx { position: relative; display: block; flex: none; width: 18px; height: 18px; background: #fff; border: 2px solid #777; }
.bx::before { content: ""; position: absolute; left: 2px; right: 2px; top: 5px; height: 3px; background: #222; }
.bx.plus::after { content: ""; position: absolute; top: 2px; bottom: 2px; left: 5px; width: 3px; background: #222; }
.st { width: 16px; height: 16px; margin-top: 12px; }
.st.bolt { height: 24px; margin-top: 6px; }
.q { flex: none; width: 16px; margin-top: 12px; padding-left: 1px; font: bold 26px/24px "Liberation Sans", sans-serif; color: #0b2f8f; }
.ti { width: 28px; height: 28px; margin: 0 10px 0 2px; }
.lb { margin-top: -3px; }
.lat { font-size: 22px; }
.sel { background: #efefef; margin-left: -4px; padding: 0 4px; }
.strong { font-weight: 700; font-size: 25px; }
.scroller { flex: 1; position: relative; display: flex; justify-content: center; }
.thumb { display: block; width: 4px; height: 458px; margin: 111px 0 0 -2px; background: #a0a0a0; }

/* details */
.details { flex: 1; background: #fff; overflow: hidden; }
.dt { width: 460px; table-layout: fixed; border-collapse: collapse; font-size: 22px; }
.dt td { height: 42px; padding: 0 0 8px 6px; border: 2px solid #a4a4a4; white-space: nowrap; }
.dt td.gut { border: 0; border-right: 2px solid #a4a4a4; padding: 0 0 3px 5px; background: #fff; }
.c0 { width: 29px; }
.c1 { width: 148px; }
.sec { font-weight: 700; }
.hl { background: #0078c8; color: #fff; }

/* toolbar */
.toolbar { flex: none; display: flex; align-items: center; height: 52px; padding: 0 0 4px 18px; overflow: hidden; font-size: 24px; }
.tg { flex: none; display: flex; align-items: center; }
.ga { margin-left: 10px; gap: 2px; }
.gb { margin-left: 5px; gap: 1px; }
.gc { margin-left: 5px; }
.gd { margin-left: 16px; }
.tool { flex: none; display: flex; align-items: center; justify-content: center; width: 44px; height: 26px; }
span.tool { height: 44px; }
span.tool svg { width: 26px; height: 26px; }
.tool.on { border: 2px solid #3a96ec; }
.tcaret { flex: none; width: 22px; display: flex; justify-content: center; }
.tsep { flex: none; width: 2px; height: 40px; background: #ccced8; }
.s5 { margin-left: 5px; }
.s3 { margin-left: 3px; }
.s4 { margin-left: 4px; }
.ttext { flex: none; width: 48px; white-space: nowrap; }
.t1 { margin-left: 14px; }
.t2 { margin-left: 8px; }
.tcur { width: 26px; height: 32px; margin-left: 16px; }
.caret.mode { flex: none; margin-left: 4px; border-width: 6px 6px 0; }

/* viewport */
.view { flex: none; height: 770px; background: linear-gradient(#6b8bdc, #ffffff); overflow: hidden; }
.scene { width: 1196px; height: 770px; overflow: hidden; }
.plate { fill: #a0a0a0; }
.pl-line { fill: none; stroke: #e6e6e6; stroke-width: 2; }
.pl-dark { fill: #404040; }
.pl-edge { fill: none; stroke: #ececec; stroke-width: 2; }
.cross { fill: none; stroke: #d9475a; stroke-width: 2; }
.blt { fill: none; stroke: #bcd6f0; stroke-width: 2; }
.sc { font: 21px "Liberation Sans", sans-serif; text-anchor: middle; fill: #000; }

/* lower */
.lower { flex: 1; display: flex; gap: 8px; margin-top: 8px; min-height: 0; }
.lp { display: flex; flex-direction: column; min-width: 0; }
.gfx { flex: none; width: 924px; }
.tbl { flex: 1; }
.lp .phead { height: 44px; padding-bottom: 5px; border-top: 3px solid #ccced8; }
.tbl .phead { padding-left: 7px; padding-right: 0; border-right: 0; }
.lp-body { flex: 1; }
.fill-white { background: #fff; }
.fill-gray { background: #a0a0a0; }

/* status */
.status { position: relative; height: 31px; background: #0078c8; overflow: hidden; }
.msg { position: absolute; left: 1644px; top: 15px; width: 30px; height: 20px; background: linear-gradient(#fbe27a, #f5c842); }
.ring { position: absolute; left: 1658px; top: 6px; width: 20px; height: 24px; border: 2px solid #111; border-radius: 50%; }

/* annotation overlay */
.marks { position: absolute; left: 0; top: 0; width: 1664px; height: 1408px; pointer-events: none; }
.ar-line { fill: none; stroke: #ee1c25; stroke-width: 13; stroke-linecap: round; }
.ar-head { fill: #ee1c25; }
.redbox { fill: none; stroke: #ee1c25; stroke-width: 10; }
```
